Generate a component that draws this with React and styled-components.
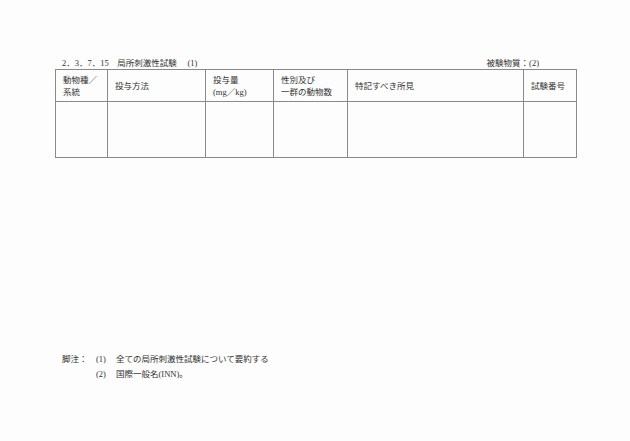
import React from "react";
import styled, { createGlobalStyle } from "styled-components";

const GlobalStyle = createGlobalStyle`
  html, body {
    margin: 0;
    padding: 0;
    background: #fdfdfd;
  }
  body {
    font-family: "Liberation Serif", "Noto Sans CJK JP", serif;
    color: #333;
  }
`;

const Page = styled.div`
  width: 630px;
  height: 441px;
  box-sizing: border-box;
  padding: 55px 0 0 55px;
`;

const TitleRow = styled.div`
  width: 521px;
  display: flex;
  justify-content: space-between;
  align-items: flex-end;
  box-sizing: border-box;
  padding: 0 37px 0 7px;
  font-size: 8.5px;
  line-height: 12px;
  height: 14px;
`;

const Title = styled.span`
  white-space: pre;
`;

const Grid = styled.table`
  width: 521px;
  border-collapse: collapse;
  table-layout: fixed;
  font-size: 8.5px;
  line-height: 12px;
`;

const HeadCell = styled.th`
  width: ${(p) => p.$w}px;
  height: 32px;
  border: 1px solid #8a8a8a;
  padding: 0 0 0 ${(p) => p.$pad || 7}px;
  text-align: left;
  font-weight: normal;
  vertical-align: middle;
  box-sizing: border-box;
`;

const BodyCell = styled.td`
  height: 55px;
  border: 1px solid #8a8a8a;
  padding: 0;
`;

const Notes = styled.div`
  margin-top: 195px;
  padding-left: 7px;
  display: grid;
  grid-template-columns: 34px 20px auto;
  row-gap: 3px;
  font-size: 8.5px;
  line-height: 12px;
`;

const columns = [
  { w: 52, label: ["動物種／", "系統"] },
  { w: 98, label: ["投与方法"] },
  { w: 68, label: ["投与量", "(mg／kg)"] },
  { w: 74, label: ["性別及び", "一群の動物数"] },
  { w: 176, label: ["特記すべき所見"] },
  { w: 53, label: ["試験番号"] },
];

export default function App() {
  return (
    <>
      <GlobalStyle />
      <Page>
        <TitleRow>
          <Title>{"2．3．7．15　局所刺激性試験　 (1)"}</Title>
          <span>被験物質：(2)</span>
        </TitleRow>
        <Grid>
          <thead>
            <tr>
              {columns.map((c, i) => (
                <HeadCell key={i} $w={c.w}>
                  {c.label.map((l, j) => (
                    <div key={j}>{l}</div>
                  ))}
                </HeadCell>
              ))}
            </tr>
          </thead>
          <tbody>
            <tr>
              {columns.map((c, i) => (
                <BodyCell key={i} />
              ))}
            </tr>
          </tbody>
        </Grid>
        <Notes>
          <span>脚注：</span>
          <span>(1)</span>
          <span>全ての局所刺激性試験について要約する</span>
          <span />
          <span>(2)</span>
          <span>国際一般名(INN)。</span>
        </Notes>
      </Page>
    </>
  );
}
